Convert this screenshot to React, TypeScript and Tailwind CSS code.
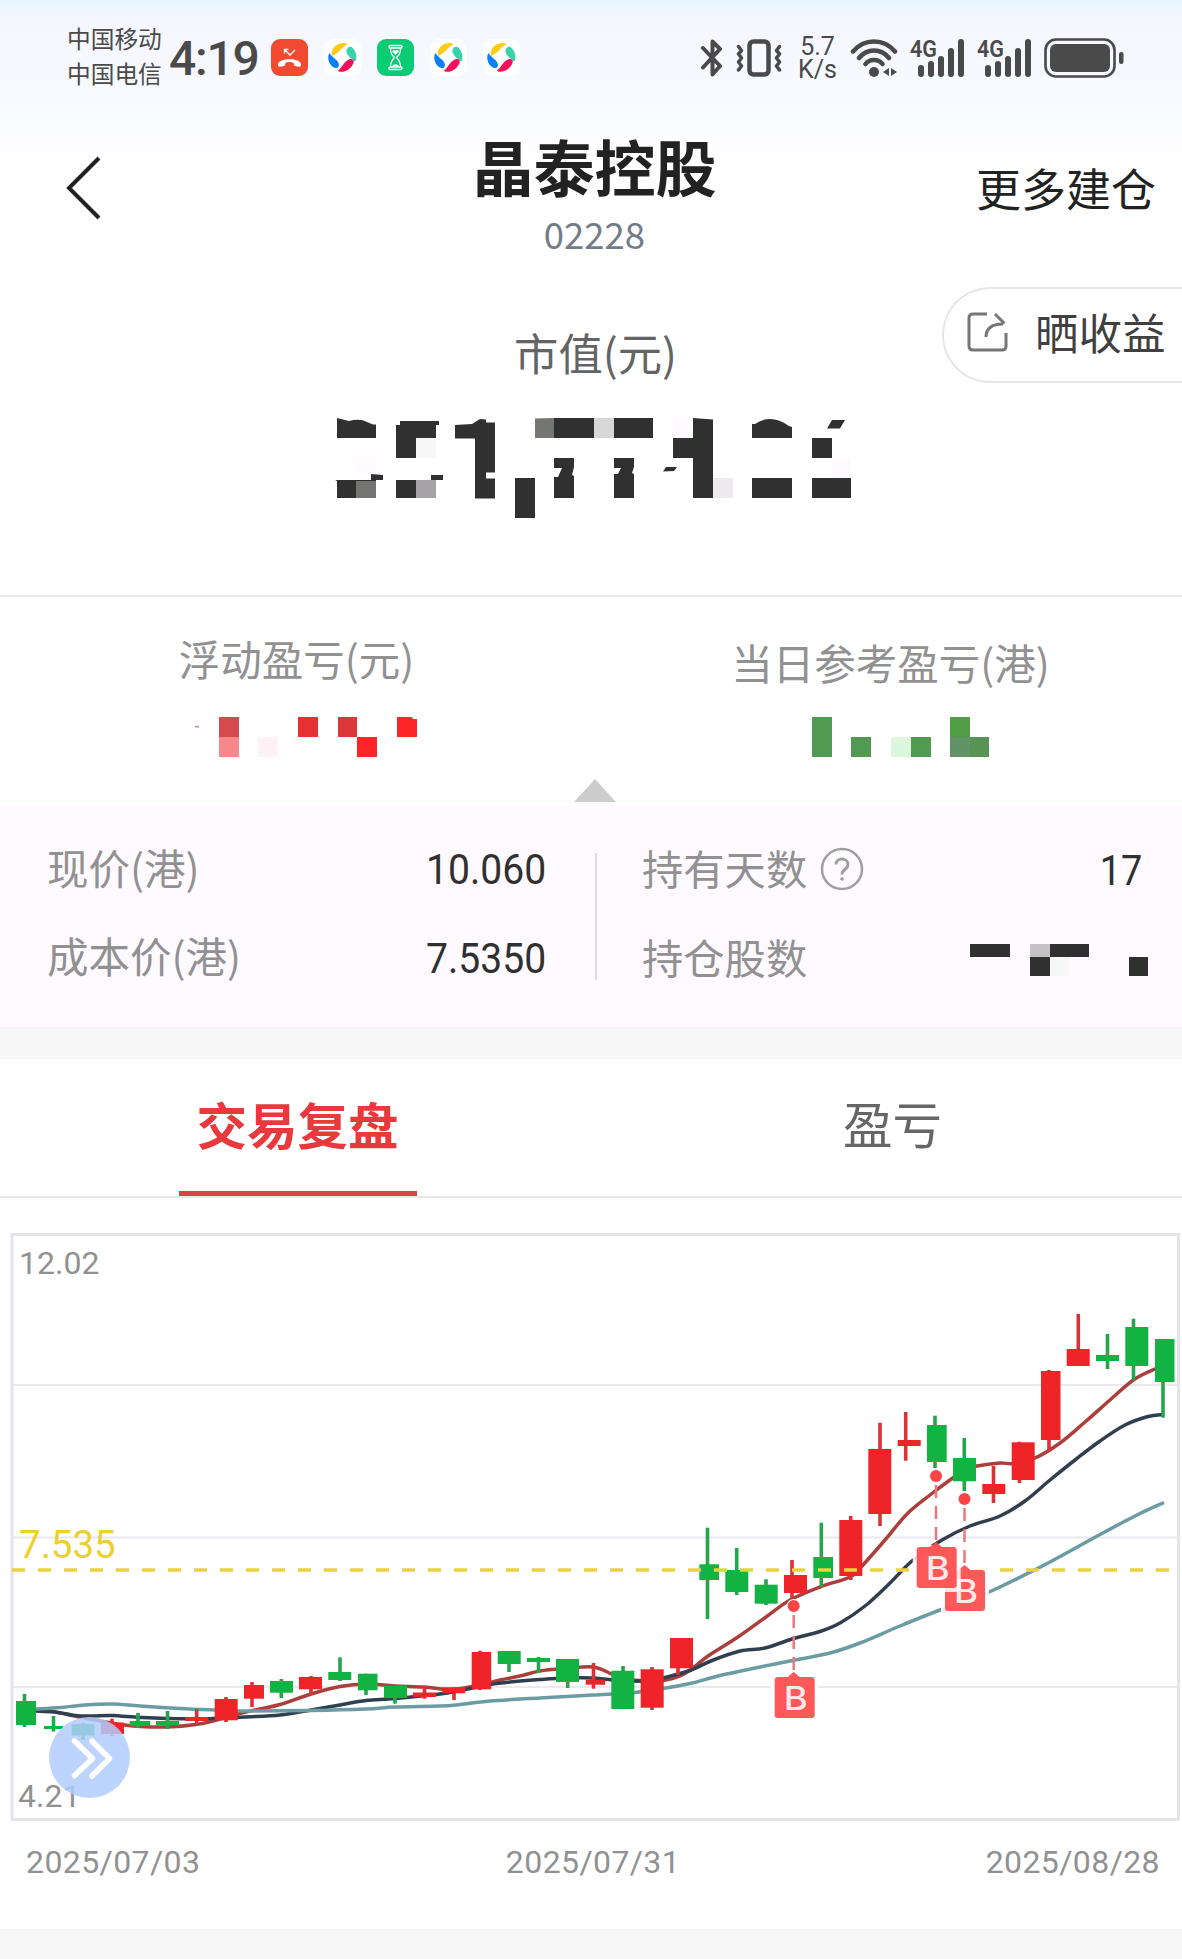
import { useState } from "react";

const INK = "#303030";

// left, width, body top, body bottom, wick x, high, low, rising
type Candle = [number, number, number, number, number, number, number, boolean];

const candles: Candle[] = [
  [16, 20, 1701, 1725, 24.5, 1694, 1727, false],
  [44, 19, 1726, 1729, 53.5, 1716, 1731.5, false],
  [71.5, 23, 1724, 1735.5, 83, 1723, 1740, false],
  [101, 23, 1722.5, 1734, 112, 1718.7, 1736, true],
  [129.7, 20.5, 1721, 1726, 138, 1713, 1728, false],
  [156, 23, 1721, 1725.3, 167.5, 1711, 1729, false],
  [185.3, 23, 1717, 1721, 196.7, 1709, 1724, true],
  [214.7, 23, 1699, 1720.3, 226, 1697, 1722, true],
  [244, 20, 1685, 1698.7, 252, 1682, 1707, true],
  [270, 23, 1681, 1692.7, 281.3, 1679, 1698, false],
  [299, 23, 1677, 1689.3, 311, 1676, 1695, true],
  [328.3, 23, 1672, 1680, 340, 1657.3, 1681, false],
  [358, 19.5, 1673.7, 1690.3, 366, 1673.7, 1695, false],
  [384, 23, 1685.7, 1698, 395, 1685.7, 1703.7, false],
  [413, 23, 1692.5, 1697, 424.5, 1686, 1698.7, true],
  [442.3, 23, 1687.3, 1693.3, 454, 1687.3, 1700, true],
  [471.7, 19.5, 1652, 1689.3, 480, 1650.7, 1690, true],
  [497.7, 23, 1651, 1664, 509, 1651, 1672, false],
  [527, 23, 1658, 1662, 538.5, 1657, 1673, false],
  [556, 23, 1659, 1682, 567.7, 1659, 1688, false],
  [585.7, 19.5, 1679.7, 1684.7, 593.5, 1663, 1688.7, true],
  [611.3, 23, 1670.7, 1709, 623, 1666, 1709, false],
  [640.7, 23, 1669.3, 1707.7, 652, 1667, 1710, true],
  [670, 23, 1638, 1668.3, 678, 1638, 1675, true],
  [699.3, 19.7, 1564.3, 1580, 707.5, 1527.7, 1619, false],
  [725.3, 23, 1570, 1592, 736.7, 1548, 1595, false],
  [754.7, 23, 1584.7, 1603.7, 766, 1579.3, 1605, false],
  [784, 23, 1575, 1593, 792, 1560, 1598, true],
  [813.3, 19.7, 1557, 1578, 821.3, 1522.7, 1586.7, false],
  [839.3, 23, 1520, 1576, 850.7, 1516, 1580, true],
  [868.3, 23, 1449, 1514, 880, 1422.7, 1526, true],
  [897.7, 23, 1440, 1446, 905.7, 1412, 1460.7, true],
  [927, 19.7, 1425, 1462, 935, 1415.7, 1468, false],
  [953, 23, 1458, 1481.3, 964.3, 1438, 1491, false],
  [982.3, 23, 1484, 1494, 993.5, 1466, 1503, true],
  [1011.7, 23, 1442.3, 1480, 1019.5, 1441.7, 1483, true],
  [1041, 19.5, 1371, 1440, 1049, 1370, 1451.7, true],
  [1066.7, 23, 1349, 1366, 1078.3, 1314, 1366, true],
  [1096, 23, 1355, 1361, 1107.5, 1334, 1369, false],
  [1125.3, 23, 1327, 1366, 1133.5, 1318.7, 1380, false],
  [1155, 19.5, 1339, 1382, 1163, 1339, 1417.7, false],
];

type Point = [number, number];

const ma5: Point[] = [
  [36, 1710], [55, 1712], [75, 1716], [100, 1721], [120, 1724.5], [140, 1726.5], [167, 1727], [196, 1724.5],
  [215, 1720.5], [240, 1713.5], [260, 1709], [280, 1704.5], [311, 1694], [340, 1686.5], [366, 1684],
  [395, 1686], [424, 1687], [450, 1689.5], [475, 1686], [500, 1680], [520, 1676], [540, 1671],
  [567, 1668.5], [593, 1667], [612, 1674], [625, 1679], [650, 1681], [666, 1680], [680, 1676],
  [693, 1668], [708, 1656], [738, 1637], [766, 1617], [790, 1600], [820, 1587], [850, 1577], [862, 1566],
  [885, 1540], [907, 1514], [930, 1495], [952, 1478.5], [965, 1470], [977, 1466], [1000, 1463],
  [1013, 1463.5], [1035, 1458], [1060, 1443], [1085, 1422], [1110, 1400], [1134, 1379.5], [1156, 1368.5],
];

const ma10: Point[] = [
  [36, 1711], [55, 1712], [75, 1715.5], [92, 1716], [112, 1715.5], [140, 1717.5], [167, 1718.5],
  [215, 1718.5], [245, 1717], [280, 1715], [311, 1710], [340, 1705], [366, 1700.5], [395, 1698.5],
  [440, 1694], [460, 1690.5], [490, 1684.5], [515, 1681.5], [540, 1679.5], [567, 1678], [593, 1678],
  [625, 1681], [650, 1680.5], [665, 1677.5], [690, 1670.5], [712, 1660.5], [740, 1651], [765, 1648],
  [792, 1639], [820, 1631.5], [840, 1623], [865, 1606], [890, 1583], [912, 1561], [942, 1540], [970, 1526],
  [1000, 1516], [1025, 1501], [1050, 1480], [1075, 1460], [1100, 1441], [1125, 1425], [1148, 1416.5],
  [1163, 1414.5],
];

const ma20: Point[] = [
  [36, 1709], [60, 1707.5], [85, 1705], [112, 1704], [140, 1706], [180, 1708.5], [215, 1710], [245, 1711],
  [311, 1710.5], [366, 1709], [395, 1707], [440, 1706], [460, 1704.5], [490, 1701], [540, 1698],
  [593, 1695], [635, 1692.5], [663, 1688.5], [690, 1683.5], [720, 1675.5], [755, 1668], [795, 1660],
  [830, 1653], [860, 1643], [900, 1626], [940, 1610], [970, 1600], [1000, 1587], [1050, 1562],
  [1100, 1534.5], [1140, 1513.5], [1164, 1502.5],
];

const buys = [
  { x: 793.7, dot: 1606, box: 1677, left: 774.7 },
  { x: 964.5, dot: 1499, box: 1570, left: 945 },
  { x: 936, dot: 1476, box: 1547, left: 916.7 },
];

// smooth curve through the points
function curve(p: Point[]) {
  let d = `M${p[0][0]} ${p[0][1]}`;
  for (let i = 0; i < p.length - 1; i++) {
    const a = p[i - 1] ?? p[i];
    const b = p[i];
    const c = p[i + 1];
    const e = p[i + 2] ?? c;
    d += `C${b[0] + (c[0] - a[0]) / 6} ${b[1] + (c[1] - a[1]) / 6} ${c[0] - (e[0] - b[0]) / 6} ${c[1] - (e[1] - b[1]) / 6} ${c[0]} ${c[1]}`;
  }
  return d;
}

function SwirlIcon() {
  return (
    <svg className="h-[37px] w-[37px]" viewBox="0 0 37 37">
      <rect width="37" height="37" rx="9" fill="#fff" />
      <path d="M8 17C6 11 12 4 19 4c3 0 4.500 .7 4 1.700C19 7 14 15 8 17z" fill="#ffcb14" />
      <path d="M22.500 11c1-3 3-4 5-3 4 3 6 9 4.500 13-.5 1.500-1.500 1.500-2.500 .5C26 18 22 16 22.500 11z" fill="#37d3ac" />
      <path d="M14 31.500C18 29 20 22 26 20c3-.5 4.500 1.500 3.500 4-2 5-7 9-12 8.800-2 0-3.500-.5-3.500-1.300z" fill="#f80f5c" />
      <path d="M6 14.500C7 18 15 21 15 26c-.2 3-2.500 3.800-5 2.500C5 26 3 19 5 14.700c.3-.6 .8-.7 1-.2z" fill="#0c80fa" />
    </svg>
  );
}

function MissedCallIcon() {
  return (
    <svg className="h-[37px] w-[37px]" viewBox="0 0 37 37">
      <rect width="37" height="37" rx="9" fill="#f24a30" />
      <path d="M13.500 14.500v-4h4M13.500 10.500l5.500 5.500 5-5" fill="none" stroke="#fff" strokeWidth="1.300" />
      <path d="M7 25.500c0-7 23-7 23 0 0 3-2 2.500-6 1.500-1.500-.6-1-3-1.800-3.500-2-.8-5.400-.8-7.400 0-.8 .5-.3 2.900-1.800 3.500-4 1-6 1.500-6-1.500z" fill="#fff" />
    </svg>
  );
}

function HourglassIcon() {
  return (
    <svg className="h-[37px] w-[37px]" viewBox="0 0 37 37">
      <rect width="37" height="37" rx="9" fill="#09cc74" />
      <g fill="none" stroke="#fff" strokeWidth="1.300" strokeLinejoin="round">
        <rect x="12" y="6.500" width="13" height="2.500" rx="1" />
        <rect x="12" y="28" width="13" height="2.500" rx="1" />
        <path d="M13.500 9c0 5 1 6.500 4 9.500-3 3-4 5-4 9.500M23.500 9c0 5-1 6.500-4 9.500 3 3 4 5 4 9.500" />
      </g>
      <path d="M18.500 16l-3-3c-.5-2 2-2.700 3-1 1-1.700 3.500-1 3 1zM15 27.500c1-3 6-3 7 0z" fill="#fff" />
    </svg>
  );
}

function Signal({ className }: { className: string }) {
  return (
    <svg className={className} viewBox="0 0 56 38" fill="#4a4a4a">
      <text x="0" y="18" fontFamily="Roboto" fontWeight="600" fontSize="24" textLength="27" lengthAdjust="spacingAndGlyphs">4G</text>
      <rect x="8" y="26" width="6" height="12" rx="3" />
      <rect x="18" y="22" width="6" height="16" rx="3" />
      <rect x="28" y="17" width="6" height="21" rx="3" />
      <rect x="38" y="9" width="6" height="29" rx="3" />
      <rect x="48" y="0" width="6" height="38" rx="3" />
    </svg>
  );
}

function StatusBar() {
  return (
    <div className="flex h-[115px] items-center text-[#4a4a4a]">
      <div className="ml-[67px] w-24 pb-[3px] text-[23.7px] leading-[35px]">
        <div>中国移动</div>
        <div>中国电信</div>
      </div>
      <div className="ml-[6px] w-[102px] pt-[3px] font-[Roboto] text-[48px] font-medium leading-none tracking-[-1.2px]">4:19</div>
      <div className="flex gap-4">
        <MissedCallIcon />
        <SwirlIcon />
        <HourglassIcon />
        <SwirlIcon />
        <SwirlIcon />
      </div>
      <div className="ml-auto flex items-center pr-[57px]">
        <svg className="h-[38px] w-6" viewBox="0 0 24 38" fill="none" stroke="#4a4a4a" strokeWidth="4" strokeLinejoin="round" strokeLinecap="round">
          <path d="M3 9l17 18-7.500 8.500V2.500L20 10 3 28.500" />
        </svg>
        <svg className="ml-3 h-[38px] w-[46px]" viewBox="0 0 46 38" fill="none" stroke="#4a4a4a" strokeLinejoin="round" strokeLinecap="round">
          <rect x="13.500" y="2.500" width="19" height="33" rx="4" strokeWidth="4.500" />
          <path d="M2.500 7.500l3 4-3 3.500 3 4-3 4 3 4-3 4M43.500 7.500l-3 4 3 3.500-3 4 3 4-3 4 3 4" strokeWidth="3.500" />
        </svg>
        <div className="ml-[15px] w-[41px] pt-[2px] text-center font-[Roboto] text-[25px] leading-[22.500px]">
          <div>5.7</div>
          <div>K/s</div>
        </div>
        <svg className="ml-[12px] h-[38px] w-12" viewBox="0 0 48 38" fill="none" stroke="#4a4a4a" strokeWidth="4.500" strokeLinecap="round">
          <path d="M3 12.500C14-1 34-1 45 12.500M9 19c8-10 22-10 30 0M15.500 25c4-5.500 13-5.500 17 0" />
          <circle cx="24" cy="33" r="5" fill="#4a4a4a" stroke="none" />
          <path d="M33 33l6-4v8zM47 33l-6-4v8z" fill="#4a4a4a" stroke="none" />
        </svg>
        <Signal className="ml-3 h-[38px] w-14 overflow-visible" />
        <Signal className="ml-[11px] h-[38px] w-14 overflow-visible" />
        <svg className="ml-[11px] h-10 w-[81px]" viewBox="0 0 81 40">
          <rect x="1.500" y="1.500" width="69" height="37" rx="10.500" fill="none" stroke="#4a4a4a" strokeWidth="2.600" />
          <rect x="6" y="6" width="60" height="28" rx="6" fill="#4a4a4a" />
          <rect x="75" y="14" width="4.500" height="12" rx="2.250" fill="#4a4a4a" />
        </svg>
      </div>
    </div>
  );
}

function MaskedTotal() {
  return (
    <svg className="h-[106px] w-[530px]" viewBox="327 414 530 106" fill={INK}>
      <path d="M337 418l12 3q11-3 18 1l6 2.500h3V438h-39z" />
      <path d="M335 480h36v-6l12 1v5h-7v18h-39v-17z" />
      <path d="M356 481h20v17h-20z" fill="#747573" />
      <path d="M356 458h20v16h-20z" fill="#fefaff" />
      <path d="M400 421h39v4h-3v13h-20v20h-20v-33h4z" />
      <path d="M416 438h20v20h-20z" fill="#f6f6f6" />
      <path d="M396 480h35v-5h12v5h-7v18h-40z" />
      <path d="M416 480h20v18h-20z" fill="#a5a3a6" />
      <path d="M455 425l17-1 8-5 6 .5v3h9v50h-9v6h9v20h-20v-60h-20z" />
      <path d="M515 478h20v40h-20z" />
      <path d="M535 418.500l19-.5v20h-19z" fill="#747672" />
      <path d="M554 418h40v20h-40zM614 418h39v20h-39z" />
      <path d="M594 418h20v20h-20z" fill="#d7d7d7" />
      <path d="M554 458h20v9l-2 8 2 1v22h-20v-21h4l4-9h-8zM614 458h20v9l-2 6 2 1v24h-20v-24h4l3-6h-7z" />
      <path d="M666 467h11l-3 4-11 .5z" />
      <path d="M673 418h20v20h-20zM832 458h19v20h-19z" fill="#fefaff" />
      <path d="M693 418l20 1.500V498h-20v-40h-20v-20h20z" />
      <path d="M713 478h20v20h-20z" fill="#eeeaed" />
      <path d="M752 424h3q16-11 34 2l3 1v11h-40zM752 478h40v20h-40z" />
      <path d="M832 420h13l-5 8.500h-13zM812 438h20v20h-20zM812 478h39v20h-39z" />
    </svg>
  );
}

function Holding() {
  return (
    <section className="bg-[#fefaff] pl-[47px] pr-[40px]">
      <div className="flex h-[221px] pt-[21px]">
        <div className="mt-[26px] flex h-[127px] w-[550px] flex-col border-r-2 border-[#dedce0] pr-[49px]">
          <div className="-mt-[9px] flex h-[48px] items-center justify-between">
            <span className="text-[41.500px] text-[#929192]">现价(港)</span>
            <span className="origin-right scale-x-[0.93] pt-[5px] font-[Roboto] text-[42px] text-[#303030]">10.060</span>
          </div>
          <div className="mt-[41px] flex h-[48px] items-center justify-between">
            <span className="text-[41.500px] text-[#929192]">成本价(港)</span>
            <span className="origin-right scale-x-[0.93] pt-[6px] font-[Roboto] text-[42px] text-[#303030]">7.5350</span>
          </div>
        </div>
        <div className="mt-[17px] flex flex-1 flex-col pl-[45px]">
          <div className="flex h-[48px] items-center">
            <span className="text-[41.300px] text-[#929192]">持有天数</span>
            <svg className="ml-[13px] mt-[2px] h-11 w-11" viewBox="0 0 44 44" fill="none" stroke="#a09ea1" strokeWidth="2.500">
              <circle cx="22" cy="22" r="20" />
              <path d="M16 17.500c0-7.500 12-7.500 12 0 0 5-6 4.500-6 10" strokeWidth="3" />
              <circle cx="22" cy="32" r="1.300" fill="#a09ea1" strokeWidth="1" />
            </svg>
            <span className="ml-auto origin-right scale-x-[0.9] pt-[5px] font-[Roboto] text-[42px] text-[#303030]">17</span>
          </div>
          <div className="mt-[41px] flex h-[48px] items-center">
            <span className="text-[41.300px] text-[#929192]">持仓股数</span>
            <svg className="-mr-[10px] ml-auto mt-[5px] h-8 w-[182px]" viewBox="970 944 182 32" fill={INK}>
              <path d="M970 944h40v13h-40zM1049 944h40v13h-40zM1030 957h20v19h-20zM1129 957h19v19h-19z" />
              <path d="M1030 944h20v13h-20z" fill="#c4c2c5" />
              <path d="M1050 957h19v19h-19z" fill="#f6f8f7" />
            </svg>
          </div>
        </div>
      </div>
    </section>
  );
}

function KLine() {
  return (
    <svg className="block h-[592px] w-full" viewBox="0 1231 1182 592">
      <path d="M12 1385h1166M12 1537.500h1166M12 1687h1166" stroke="#e9e9ef" strokeWidth="2" />
      <rect x="12" y="1234.500" width="1166.500" height="585" fill="none" stroke="#e4e4eb" strokeWidth="3" />
      <g fill="none" strokeWidth="3.500">
        <path d={curve(ma5)} stroke="#aa3f3c" />
        <path d={curve(ma10)} stroke="#2f3f4f" />
        <path d={curve(ma20)} stroke="#6b9ca3" />
      </g>
      {candles.map(([x, w, top, bottom, wick, high, low, up]) => (
        <g key={x} fill={up ? "#ee2429" : "#12b342"}>
          <rect x={wick - 1.800} y={high} width="3.600" height={low - high} fill={up ? "#d93237" : "#25a64b"} />
          <rect x={x} y={top} width={w} height={bottom - top} />
        </g>
      ))}
      <path d="M12 1570h1166" stroke="#ecd23c" strokeWidth="3.500" strokeDasharray="13 13" />
      {buys.map((b) => (
        <g key={b.x}>
          <path d={`M${b.x} ${b.dot + 9}V${b.box}`} stroke="#e8797c" strokeWidth="2.500" strokeDasharray="13 8" />
          <circle cx={b.x} cy={b.dot} r="7" fill="#fff" />
          <circle cx={b.x} cy={b.dot} r="6" fill="#fc4447" />
          <rect x={b.left - 4} y={b.box - 2} width="48" height="47" rx="5" fill="#fff" fillOpacity=".85" />
          <path
            d={`M${b.left + 3} ${b.box}H${b.x - 6}L${b.x} ${b.box - 5}L${b.x + 6} ${b.box}H${b.left + 37}q3 0 3 3v35q0 3 -3 3H${b.left + 3}q-3 0 -3 -3v-35q0 -3 3 -3z`}
            fill="#ff4b4c"
            fillOpacity=".93"
          />
          <text x={b.left + 9} y={b.box + 33} textLength="24" lengthAdjust="spacingAndGlyphs" fontFamily="Inter" fontWeight="500" fontSize="32" fill="#ffe9e9">B</text>
        </g>
      ))}
      <g fontFamily="Roboto" fill="#929192" fontSize="32">
        <text x="19" y="1274">12.02</text>
        <text x="18" y="1807">4.21</text>
      </g>
      <text x="19" y="1557.500" fontFamily="Roboto" fontSize="38.500" fill="#eed02c">7.535</text>
    </svg>
  );
}

export default function App() {
  const [tab, setTab] = useState(0);

  return (
    <div className="h-[1959px] w-[1182px] overflow-hidden bg-white font-['Noto_Sans_CJK_SC',sans-serif] leading-none">
      <div className="bg-[linear-gradient(to_bottom,#e9f6ff_0px,#f6f6ff_28px,#f7faff_85px,#f8fbff_118px,#fdfdff_140px,#fff_180px)]">
        <StatusBar />
        <header className="flex h-[172px] justify-between">
          <div className="w-[300px] pl-[65px] pt-[41px]">
            <svg className="h-16 w-10" viewBox="0 0 40 64" fill="none" stroke="#222" strokeWidth="4">
              <path d="M34 2L4 32l30 30" />
            </svg>
          </div>
          <div className="flex flex-col items-center pl-[17px] pt-[21px]">
            <h1 className="text-[61px] font-bold leading-[60px] text-[#222]">晶泰控股</h1>
            <div className="mt-[20px] text-[36.500px] leading-9 text-[#737d87]">02228</div>
          </div>
          <div className="w-[310px] pr-[26px] pt-[50px] text-right text-[45px] leading-[45px] text-[#222]">更多建仓</div>
        </header>
      </div>

      <section className="flex h-[310px] justify-between border-b-2 border-[#e9e9e9]">
        <div className="w-[240px]" />
        <div className="flex flex-col items-center pl-[2px] pt-[43px]">
          <div className="pl-[7px] text-[44.300px] leading-[44px] text-[#646464]">市值(元)</div>
          <div className="mt-[40px]">
            <MaskedTotal />
          </div>
        </div>
        <button
          type="button"
          className="flex h-24 w-[240px] items-center rounded-l-full border-2 border-r-0 border-[#e6e6e6] pb-[6px] pl-[23px] text-[43.500px] text-[#404040]"
        >
          <svg className="mr-[26px] h-[42px] w-[42px]" viewBox="0 0 42 42" fill="none" stroke="#777" strokeWidth="3">
            <path d="M20 3H6q-4 0-4 4v28q0 4 4 4h29q4 0 4-4V22M19 26c0-8 5-13 17-13M28 3l9.500 9.500" />
          </svg>
          晒收益
        </button>
      </section>

      <section className="flex h-[182px] text-[41.500px] leading-[41px] text-[#929192]">
        <div className="w-[594px] text-center">
          <div className="pl-[2px] pt-[41px]">浮动盈亏(元)</div>
          <svg className="ml-[193px] mt-[37px] h-[42px] w-[226px]" viewBox="192 716 226 42" fill="#ff2428">
            <path d="M194 726h4v1.500h-4z" fill="#d88" />
            <path d="M218 717h20v20h-20z" fill="#d54b4d" />
            <path d="M218 737h20v20h-20z" fill="#f6878b" />
            <path d="M257 737h20v20h-20z" fill="#fff1f5" />
            <path d="M297 717h20v20h-20z" fill="#e53134" />
            <path d="M337 717h19v20h-19z" fill="#dc373b" />
            <path d="M356 737h20v20h-20zM396 717h15l1 2h4v18h-20z" />
          </svg>
        </div>
        <div className="w-[594px] text-center">
          <div className="pl-[8px] pt-[45px]">当日参考盈亏(港)</div>
          <svg className="ml-[216px] mt-[33px] h-[42px] w-[182px]" viewBox="807 716 182 42" fill="#529a51">
            <path d="M812 717h20v40h-20zM851 737h20v20h-20zM911 737h20v20h-20z" />
            <path d="M891 737h20v20h-20z" fill="#ddf6de" />
            <path d="M950 717h20v20h-20z" fill="#529c47" />
            <path d="M950 737h20v20h-20z" fill="#629367" />
            <path d="M970 737h20v20h-20z" fill="#569355" />
          </svg>
        </div>
      </section>
      <div className="flex h-[27px] justify-center pl-[7px]">
        <svg className="h-[23px] w-[42px]" viewBox="0 0 42 23" fill="#cdcdcd">
          <path d="M21 0l21 23H0z" />
        </svg>
      </div>

      <Holding />
      <div className="h-8 bg-[#f7f7f7]" />

      <nav className="flex h-[139px] border-b-2 border-[#e8e8e8]">
        {["交易复盘", "盈亏"].map((name, i) => (
          <button
            key={name}
            type="button"
            onClick={() => setTab(i)}
            className="flex w-[595px] shrink-0 flex-col items-center justify-between pt-[39px]"
          >
            <span className={tab === i ? "text-[50.500px] font-bold leading-[50px] text-[#e8393d]" : "text-[49.500px] leading-[50px] text-[#666]"}>
              {name}
            </span>
            <span className={tab === i ? "h-[5px] w-[238px] bg-[#d94346]" : "h-[5px] w-[238px]"} />
          </button>
        ))}
      </nav>

      <div className="relative mt-[33px]">
        <KLine />
        <button type="button" className="absolute left-[49px] top-[486px] h-[81px] w-[81px] rounded-full bg-[#b0cdfe]/85">
          <svg className="h-[81px] w-[81px]" viewBox="0 0 81 81" fill="none" stroke="#fff" strokeWidth="5.500" strokeLinecap="round" strokeLinejoin="round">
            <path d="M25.500 24l18 17.500-18 17M43 24l17.500 17.500L43 59" />
          </svg>
        </button>
      </div>

      <div className="flex h-[106px] justify-between pl-[26px] pr-[22px] pt-[21px] font-[Roboto] text-[32px] leading-[36px] tracking-[0.4px] text-[#929192]">
        <span>2025/07/03</span>
        <span>2025/07/31</span>
        <span>2025/08/28</span>
      </div>
      <div className="h-[30px] bg-[#f6f6f6]" />
    </div>
  );
}
